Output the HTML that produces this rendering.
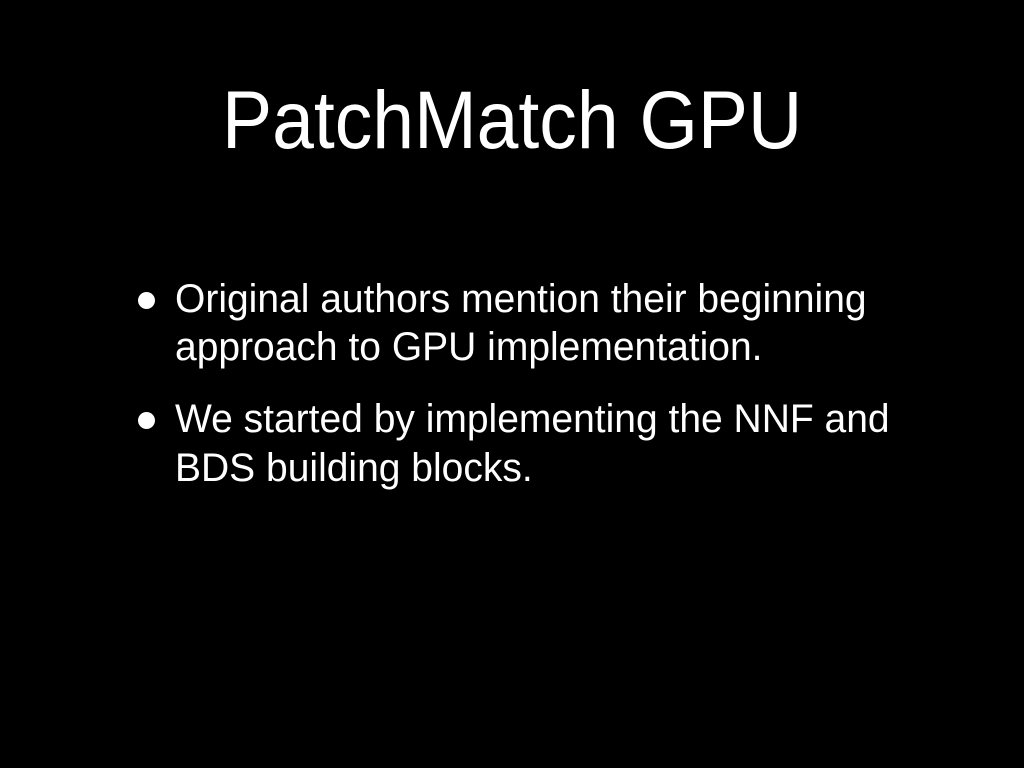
<!DOCTYPE html>
<html><head><meta charset="utf-8"><style>
html,body{margin:0;padding:0;background:#000;}
body{width:1024px;height:768px;position:relative;overflow:hidden;font-family:"Liberation Sans",sans-serif;color:#fff;}
.l{position:absolute;white-space:nowrap;transform-origin:0 0;line-height:1;}
.t{font-size:82px;left:222px;top:80px;transform:scaleX(0.916);}
.b{font-size:40px;transform:scaleX(0.975);}
.dot{position:absolute;width:17px;height:17px;border-radius:50%;background:#fff;}
</style></head><body>
<div class="l t">PatchMatch GPU</div>
<div class="dot" style="left:138px;top:292px"></div>
<div class="l b" style="left:175px;top:279px">Original authors mention their beginning</div>
<div class="l b" style="left:175px;top:327px">approach to GPU implementation.</div>
<div class="dot" style="left:138px;top:412px"></div>
<div class="l b" style="left:175px;top:399px">We started by implementing the NNF and</div>
<div class="l b" style="left:175px;top:448px">BDS building blocks.</div>
</body></html>
